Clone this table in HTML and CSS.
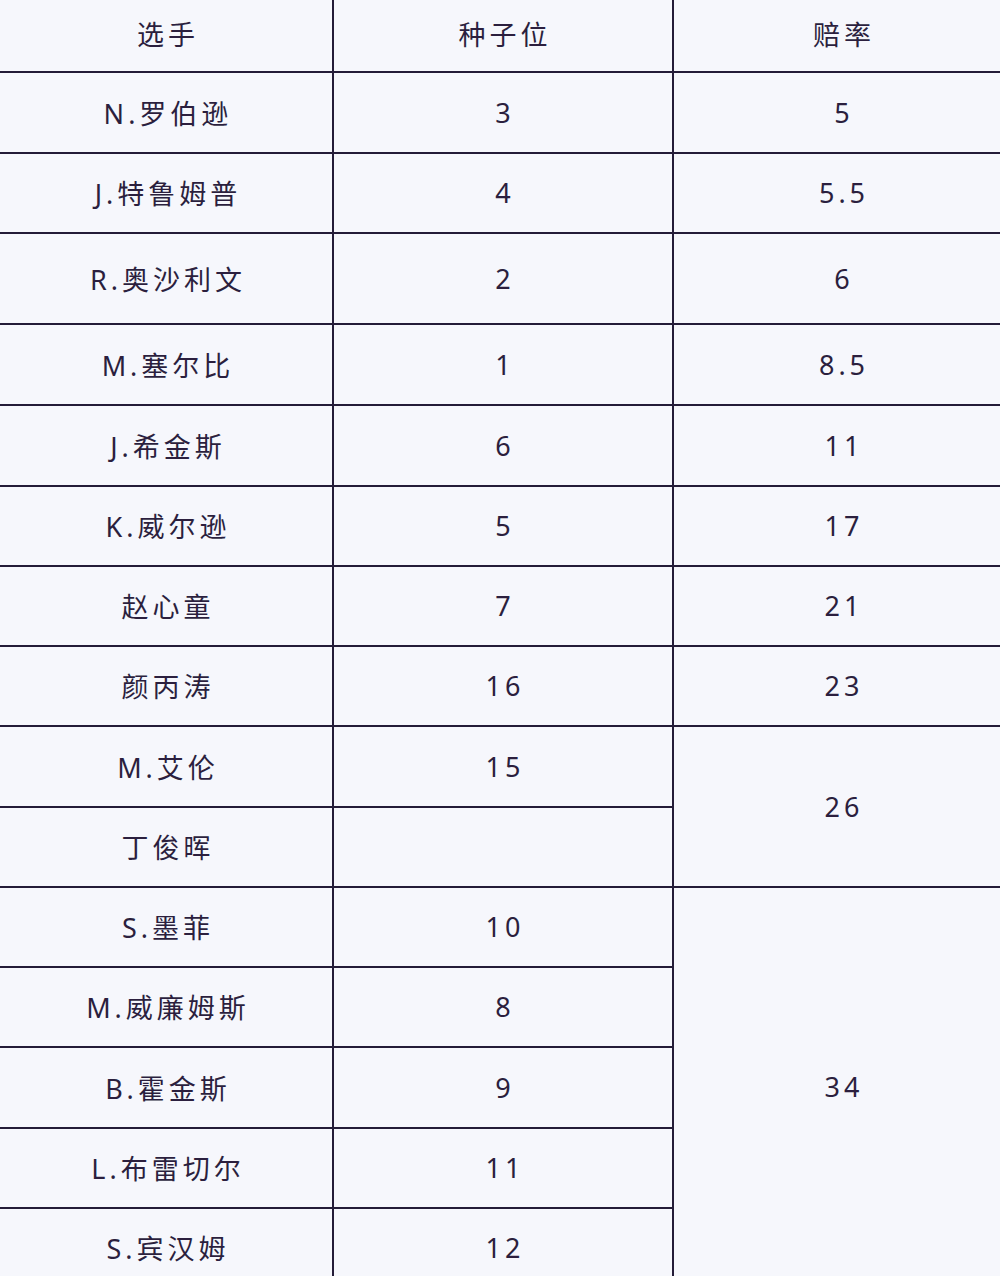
FILE: index.html
```html
<!DOCTYPE html>
<html lang="zh">
<head>
<meta charset="utf-8">
<link rel="stylesheet" href="styles.css">
</head>
<body>
<div class="table">
  <div class="cell head">选手</div><div class="cell head">种子位</div><div class="cell head c3">赔率</div>
  <div class="cell">N.罗伯逊</div><div class="cell">3</div><div class="cell c3">5</div>
  <div class="cell">J.特鲁姆普</div><div class="cell">4</div><div class="cell c3">5.5</div>
  <div class="cell">R.奥沙利文</div><div class="cell">2</div><div class="cell c3">6</div>
  <div class="cell">M.塞尔比</div><div class="cell">1</div><div class="cell c3">8.5</div>
  <div class="cell">J.希金斯</div><div class="cell">6</div><div class="cell c3">11</div>
  <div class="cell">K.威尔逊</div><div class="cell">5</div><div class="cell c3">17</div>
  <div class="cell">赵心童</div><div class="cell">7</div><div class="cell c3">21</div>
  <div class="cell">颜丙涛</div><div class="cell">16</div><div class="cell c3">23</div>
  <div class="cell">M.艾伦</div><div class="cell">15</div><div class="cell c3 span2">26</div>
  <div class="cell">丁俊晖</div><div class="cell"></div>
  <div class="cell">S.墨菲</div><div class="cell">10</div><div class="cell c3 span5">34</div>
  <div class="cell">M.威廉姆斯</div><div class="cell">8</div>
  <div class="cell">B.霍金斯</div><div class="cell">9</div>
  <div class="cell">L.布雷切尔</div><div class="cell">11</div>
  <div class="cell last">S.宾汉姆</div><div class="cell last">12</div>
</div>
</body>
</html>
```

FILE: styles.css
```css
html, body {
  margin: 0;
  padding: 0;
  background: #f6f7fc;
  overflow: hidden;
}

.table {
  width: 1000px;
  height: 1276px;
  display: grid;
  grid-template-columns: 332px 338px 326px;
  grid-template-rows: 71px 79px 78px 89px 79px 79px 78px 78px 78px 79px 78px 78px 78px 79px 78px 67px;
  gap: 2px;
  background: #241c38;
  font-family: "Noto Sans", "Noto Sans CJK SC", sans-serif;
  font-size: 27px;
  color: #2b1f3e;
  letter-spacing: 4px;
}

.cell {
  background: #f6f7fc;
  display: flex;
  align-items: center;
  justify-content: center;
  padding-left: 4px;
  padding-bottom: 1px;
}

.head {
  padding-bottom: 4px;
}

.c3 {
  padding-left: 14px;
}

.span2 {
  grid-row: span 2;
}

.span5 {
  grid-row: span 5;
  padding-top: 10px;
}

.last {
  padding-top: 10px;
}
```
